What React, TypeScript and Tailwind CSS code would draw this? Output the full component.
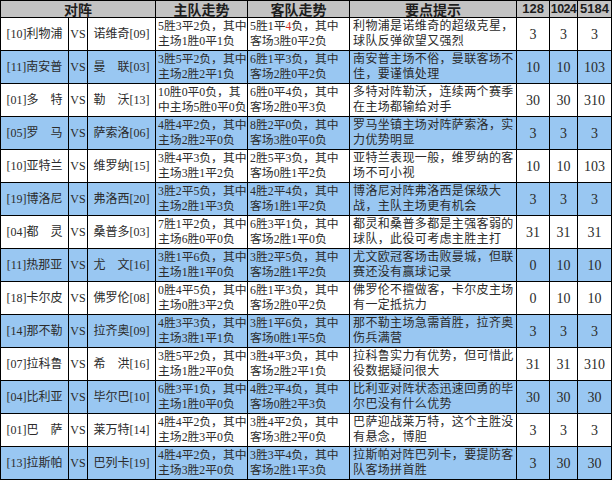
import React from "react";

type Row = {
  h: string;
  a: string;
  hs: [string, string];
  as: [React.ReactNode, string];
  tip: [string, string];
  n: [string, string, string];
};

const rows: Row[] = [
  { h: "[10]利物浦", a: "诺维奇[09]", hs: ["5胜3平2负，其中", "主场1胜0平1负"], as: [<>5胜1平<span className="text-[#d0302a]">4</span>负，其中</>, "客场3胜0平2负"], tip: ["利物浦是诺维奇的超级克星，", "球队反弹欲望又强烈"], n: ["3", "3", "3"] },
  { h: "[11]南安普", a: "曼　联[03]", hs: ["3胜5平2负，其中", "主场2胜2平1负"], as: ["6胜1平3负，其中", "客场2胜0平2负"], tip: ["南安普主场不俗，曼联客场不", "佳，要谨慎处理"], n: ["10", "10", "103"] },
  { h: "[01]多　特", a: "勒　沃[13]", hs: ["10胜0平0负，其", "中主场5胜0平0负"], as: ["6胜0平4负，其中", "客场2胜0平3负"], tip: ["多特对阵勒沃，连续两个赛季", "在主场都输给对手"], n: ["30", "30", "310"] },
  { h: "[05]罗　马", a: "萨索洛[06]", hs: ["4胜4平2负，其中", "主场2胜2平0负"], as: ["8胜2平0负，其中", "客场3胜0平0负"], tip: ["罗马坐镇主场对阵萨索洛，实", "力优势明显"], n: ["3", "3", "3"] },
  { h: "[10]亚特兰", a: "维罗纳[15]", hs: ["3胜4平3负，其中", "主场3胜1平2负"], as: ["2胜5平3负，其中", "客场0胜1平2负"], tip: ["亚特兰表现一般，维罗纳的客", "场不可小视"], n: ["10", "10", "103"] },
  { h: "[19]博洛尼", a: "弗洛西[20]", hs: ["3胜2平5负，其中", "主场2胜1平3负"], as: ["4胜2平4负，其中", "客场1胜1平2负"], tip: ["博洛尼对阵弗洛西是保级大", "战，主队主场更有机会"], n: ["3", "3", "3"] },
  { h: "[04]都　灵", a: "桑普多[03]", hs: ["7胜1平2负，其中", "主场6胜0平0负"], as: ["6胜3平1负，其中", "客场2胜1平0负"], tip: ["都灵和桑普多都是主强客弱的", "球队，此役可考虑主胜主打"], n: ["31", "31", "31"] },
  { h: "[11]热那亚", a: "尤　文[16]", hs: ["3胜1平6负，其中", "主场1胜1平0负"], as: ["3胜2平5负，其中", "客场2胜1平2负"], tip: ["尤文欧冠客场击败曼城，但联", "赛还没有赢球记录"], n: ["0", "10", "10"] },
  { h: "[18]卡尔皮", a: "佛罗伦[08]", hs: ["0胜4平5负，其中", "主场0胜3平2负"], as: ["6胜1平3负，其中", "客场2胜0平2负"], tip: ["佛罗伦不擅做客，卡尔皮主场", "有一定抵抗力"], n: ["0", "10", "10"] },
  { h: "[14]那不勒", a: "拉齐奥[09]", hs: ["4胜3平3负，其中", "主场3胜1平1负"], as: ["3胜1平6负，其中", "客场0胜1平5负"], tip: ["那不勒主场急需首胜，拉齐奥", "伤兵满营"], n: ["3", "3", "3"] },
  { h: "[07]拉科鲁", a: "希　洪[16]", hs: ["3胜5平2负，其中", "主场1胜2平0负"], as: ["3胜4平3负，其中", "客场2胜2平1负"], tip: ["拉科鲁实力有优势，但可惜此", "役数据疑问很大"], n: ["31", "31", "310"] },
  { h: "[04]比利亚", a: "毕尔巴[10]", hs: ["6胜3平1负，其中", "主场1胜0平0负"], as: ["4胜2平4负，其中", "客场0胜2平3负"], tip: ["比利亚对阵状态迅速回勇的毕", "尔巴没有什么优势"], n: ["30", "30", "30"] },
  { h: "[01]巴　萨", a: "莱万特[14]", hs: ["4胜4平2负，其中", "主场2胜3平0负"], as: ["3胜4平2负，其中", "客场3胜2平0负"], tip: ["巴萨迎战莱万特，这个主胜没", "有悬念，博胆"], n: ["3", "3", "3"] },
  { h: "[13]拉斯帕", a: "巴列卡[19]", hs: ["4胜4平2负，其中", "主场3胜2平0负"], as: ["3胜3平4负，其中", "客场2胜1平3负"], tip: ["拉斯帕对阵巴列卡，要提防客", "队客场拼首胜"], n: ["3", "30", "30"] },
];

const serif = "font-['Liberation_Serif','Noto_Sans_CJK_SC',serif]";

export default function App() {
  return (
    <div className="w-[613px] h-[481px] bg-white overflow-hidden">
      <table className={`table-fixed border-collapse w-[611px] text-[#2b2b2b] ${serif}`}>
        <colgroup>
          <col className="w-[68px]" />
          <col className="w-[19px]" />
          <col className="w-[68px]" />
          <col className="w-[92px]" />
          <col className="w-[102px]" />
          <col className="w-[167px]" />
          <col className="w-[33px]" />
          <col className="w-[28px]" />
          <col className="w-[34px]" />
        </colgroup>
        <thead>
          <tr className="h-[17px] bg-[#c3c3c3] text-[#1e1e1e]">
            <th colSpan={3} className="border border-black p-0 text-[14px] leading-[16px] font-bold font-['Noto_Sans_CJK_SC',sans-serif]">对阵</th>
            <th className="border border-black p-0 text-[14px] leading-[16px] font-bold font-['Noto_Sans_CJK_SC',sans-serif]">主队走势</th>
            <th className="border border-black p-0 text-[14px] leading-[16px] font-bold font-['Noto_Sans_CJK_SC',sans-serif]">客队走势</th>
            <th className="border border-black p-0 text-[14px] leading-[16px] font-bold font-['Noto_Sans_CJK_SC',sans-serif]">要点提示</th>
            <th className="border border-black p-0 text-[13px] leading-[16px] font-bold font-['Liberation_Sans',sans-serif]">128</th>
            <th className="border border-black p-0 text-[12.5px] leading-[16px] font-bold font-['Liberation_Sans',sans-serif] tracking-[-0.6px]">1024</th>
            <th className="border border-black p-0 text-[13px] leading-[16px] font-bold font-['Liberation_Sans',sans-serif]">5184</th>
          </tr>
        </thead>
        <tbody>
          {rows.map((r, i) => (
            <tr key={i} className={`h-[33px] ${i % 2 === 1 ? "bg-[#99c7f2]" : "bg-white"}`}>
              <td className="border border-black p-0 text-center text-[12px] leading-[15px] whitespace-nowrap">{r.h}</td>
              <td className="border border-black p-0 text-center text-[12px] leading-[15px]">VS</td>
              <td className="border border-black p-0 text-center text-[12px] leading-[15px] whitespace-nowrap">{r.a}</td>
              <td className="border border-black py-0 pl-[2px] pr-0 text-left text-[11.8px] leading-[15px] whitespace-nowrap overflow-hidden">
                {r.hs[0]}
                <br />
                {r.hs[1]}
              </td>
              <td className="border border-black py-0 pl-[2px] pr-0 text-left text-[11.8px] leading-[15px] whitespace-nowrap overflow-hidden">
                {r.as[0]}
                <br />
                {r.as[1]}
              </td>
              <td className="border border-black py-0 pl-[3px] pr-0 text-left text-[12px] tracking-[0.35px] leading-[15px] whitespace-nowrap overflow-hidden">
                {r.tip[0]}
                <br />
                {r.tip[1]}
              </td>
              <td className="border border-black p-0 text-center text-[14px] leading-[15px]">{r.n[0]}</td>
              <td className="border border-black p-0 text-center text-[14px] leading-[15px]">{r.n[1]}</td>
              <td className="border border-black p-0 text-center text-[14px] leading-[15px]">{r.n[2]}</td>
            </tr>
          ))}
        </tbody>
      </table>
    </div>
  );
}
